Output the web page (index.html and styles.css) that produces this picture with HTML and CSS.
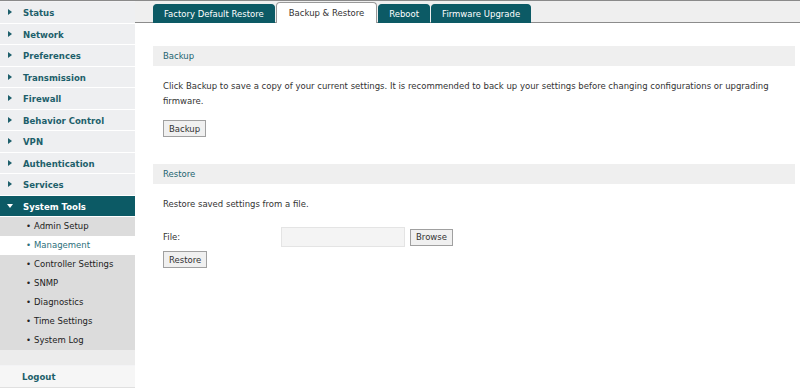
FILE: index.html
```html
<!DOCTYPE html>
<html lang="en">
<head>
    <meta charset="UTF-8">
    <title>System Tools - Management</title>
    <link rel="stylesheet" href="styles.css">
</head>
<body>
    <div class="page">
        <div class="sidebar">
            <ul class="menu">
                <li class="menu-item">Status</li>
                <li class="menu-item">Network</li>
                <li class="menu-item">Preferences</li>
                <li class="menu-item">Transmission</li>
                <li class="menu-item">Firewall</li>
                <li class="menu-item">Behavior Control</li>
                <li class="menu-item">VPN</li>
                <li class="menu-item">Authentication</li>
                <li class="menu-item">Services</li>
                <li class="menu-item menu-item-open">System Tools</li>
            </ul>
            <ul class="submenu">
                <li class="sub-item">Admin Setup</li>
                <li class="sub-item sub-item-active">Management</li>
                <li class="sub-item">Controller Settings</li>
                <li class="sub-item">SNMP</li>
                <li class="sub-item">Diagnostics</li>
                <li class="sub-item">Time Settings</li>
                <li class="sub-item">System Log</li>
            </ul>
            <div class="spacer"></div>
            <div class="logout">Logout</div>
        </div>

        <div class="main">
            <div class="tabbar">
                <div class="tab">Factory Default Restore</div>
                <div class="tab tab-active">Backup &amp; Restore</div>
                <div class="tab">Reboot</div>
                <div class="tab">Firmware Upgrade</div>
            </div>

            <div class="content">
                <div class="section-title">Backup</div>
                <p class="text">Click Backup to save a copy of your current settings. It is recommended to back up your settings before changing configurations or upgrading firmware.</p>
                <button class="btn">Backup</button>

                <div class="section-title section-gap">Restore</div>
                <p class="text">Restore saved settings from a file.</p>
                <div class="file-row">
                    <span class="file-label">File:</span>
                    <span class="file-input"></span>
                    <button class="btn">Browse</button>
                </div>
                <button class="btn">Restore</button>
            </div>
        </div>
    </div>
</body>
</html>
```

FILE: styles.css
```css
body {
    margin: 0;
    font-family: "DejaVu Sans", sans-serif;
    font-size: 8.5px;
    color: #333;
    background-color: #fff;
}

.page {
    display: flex;
    height: 388px;
    border-top: 1px solid #8a8a8a;
    box-sizing: border-box;
}

/* linkes Menü */
.sidebar {
    width: 135px;
    flex-shrink: 0;
    display: flex;
    flex-direction: column;
    background-color: #f3f3f5;
}

.menu, .submenu {
    list-style: none;
    margin: 0;
    padding: 0;
}

.menu {
    padding-top: 1px;
}

.menu-item {
    height: 20.5px;
    line-height: 21px;
    padding-left: 23px;
    border-bottom: 1px solid #fff;
    background-color: #eeeff1;
    color: #1d5f6b;
    font-weight: bold;
    font-family: "DejaVu Sans Condensed", "DejaVu Sans", sans-serif;
    font-size: 9.5px;
    position: relative;
}

.menu-item::before {
    content: '';
    position: absolute;
    left: 8px;
    top: 7px;
    border-style: solid;
    border-width: 3px 0 3px 4px;
    border-color: transparent transparent transparent #1d5f6b;
}

.menu-item-open {
    background-color: #0c5a65;
    color: #fff;
}

.menu-item-open::before {
    left: 7px;
    top: 8px;
    border-width: 4px 3px 0 3px;
    border-color: #fff transparent transparent transparent;
}

.submenu {
    background-color: #dcdcdc;
}

.sub-item {
    height: 19px;
    line-height: 19px;
    padding-left: 26px;
    color: #222;
}

.sub-item::before {
    content: '\2022';
    margin-right: 3px;
}

.sub-item-active {
    background-color: #fff;
    color: #2c6f7b;
}

.spacer {
    height: 15px;
    background-color: #ececec;
}

.logout {
    height: 21px;
    line-height: 21px;
    padding-left: 22px;
    margin-top: 1px;
    color: #1d5f6b;
    font-weight: bold;
    font-family: "DejaVu Sans Condensed", "DejaVu Sans", sans-serif;
    font-size: 9.5px;
    background-color: #f6f6f6;
    border-bottom: 1px solid #e0e0e0;
}

/* Hauptbereich */
.main {
    flex: 1;
    display: flex;
    flex-direction: column;
}

.tabbar {
    height: 21px;
    display: flex;
    align-items: flex-end;
    gap: 1px;
    padding-left: 18px;
    background-color: #efefef;
    border-bottom: 1px solid #8c8c8c;
}

.tab {
    height: 18px;
    line-height: 18px;
    padding: 0 10px;
    background-color: #0c5a65;
    color: #fff;
    border-radius: 4px 4px 0 0;
    margin-bottom: -1px;
    border: 1px solid #0c5a65;
    border-bottom: none;
}

.tab-active {
    background-color: #fff;
    color: #333;
    border-color: #999;
    padding: 0 12px;
    height: 20px;
    line-height: 20px;
}

.content {
    padding: 23px 5px 0 18px;
}

.section-title {
    height: 20px;
    line-height: 20px;
    padding-left: 10px;
    background-color: #efefef;
    color: #1d6470;
}

.section-gap {
    margin-top: 27px;
}

.text {
    margin: 13px 10px 11px 10px;
    line-height: 15px;
}

.btn {
    font-family: inherit;
    font-size: 8.5px;
    color: #333;
    height: 17px;
    padding: 0 5px;
    margin-left: 10px;
    background-color: #f0f0f0;
    border: 1px solid #a0a0a0;
    border-radius: 0;
}

.file-row {
    display: flex;
    align-items: center;
    margin: 15px 0 4px 10px;
}

.file-label {
    width: 118px;
}

.file-input {
    width: 122px;
    height: 18px;
    background-color: #f4f4f4;
    border: 1px solid #e4e4e4;
}

.file-row .btn {
    margin-left: 5px;
}
```
